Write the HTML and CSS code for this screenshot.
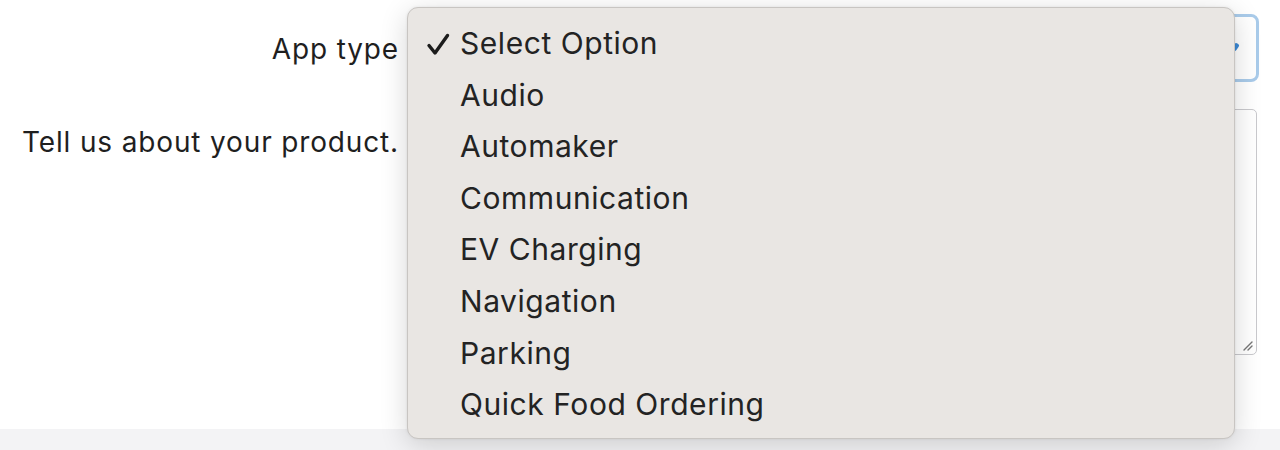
FILE: index.html
```html
<!DOCTYPE html>
<html lang="en">
<head>
<meta charset="utf-8">
<title>App form</title>
<link rel="stylesheet" href="styles.css">
</head>
<body>
<div class="page">
  <form class="form">
    <div class="row row-select">
      <label class="label">App type</label>
      <div class="select">
        <span class="arrow"></span>
      </div>
    </div>
    <div class="row row-text">
      <label class="label">Tell us about your product.</label>
      <div class="textarea">
        <svg class="grip" width="12" height="12" viewBox="0 0 12 12"><path d="M11 3 L3 11 M11 7 L7 11" stroke="#777" stroke-width="1.4" stroke-linecap="round"/></svg>
      </div>
    </div>
  </form>
  <div class="footer"></div>
  <ul class="menu">
    <li class="item selected"><svg class="check" width="24" height="24" viewBox="0 0 24 24"><path d="M3 13.5 L9 21 L21.5 3.5" fill="none" stroke="#1c1c1c" stroke-width="3.4" stroke-linecap="round" stroke-linejoin="round"/></svg>Select Option</li>
    <li class="item">Audio</li>
    <li class="item">Automaker</li>
    <li class="item">Communication</li>
    <li class="item">EV Charging</li>
    <li class="item">Navigation</li>
    <li class="item">Parking</li>
    <li class="item">Quick Food Ordering</li>
  </ul>
</div>
</body>
</html>
```
FILE: styles.css
```css
* { box-sizing: border-box; }
html, body { margin: 0; padding: 0; background: #fff; }
body {
  font-family: Inter, "Noto Sans", "Liberation Sans", sans-serif;
  color: #1f1f1f;
  width: 1280px;
  height: 450px;
  overflow: hidden;
}
.page { position: relative; height: 450px; }
.form {
  display: flex;
  flex-direction: column;
  gap: 27px;
  padding-top: 14px;
  height: 429px;
}
.row {
  display: grid;
  grid-template-columns: 398px 851px;
  column-gap: 10px;
}
.label {
  text-align: right;
  font-size: 28px;
  letter-spacing: 0.85px;
  margin-right: -1px;
}
.row-select .label { line-height: 70px; height: 68px; }
.row-text .label { line-height: 66px; }
.select {
  height: 68px;
  border: 3px solid #a9cbea;
  border-radius: 8px;
  position: relative;
  background: #fff;
}
.arrow {
  position: absolute;
  right: 18px;
  top: 26px;
  width: 5px;
  height: 8px;
  background: #3d8ad6;
  border-radius: 2px;
  transform: rotate(35deg);
}
.textarea {
  height: 246px;
  width: 849px;
  border: 1px solid #c9c9cd;
  border-radius: 5px;
  position: relative;
  background: #fff;
}
.grip { position: absolute; right: 3px; bottom: 3px; }
.footer {
  height: 21px;
  background: #f3f3f5;
}
.menu {
  position: absolute;
  left: 407px;
  top: 7px;
  width: 828px;
  height: 432px;
  margin: 0;
  padding: 10px 0 9px 0;
  list-style: none;
  background: #e9e6e3;
  border: 1px solid #c8c5c2;
  border-radius: 11px;
  box-shadow: 0 6px 28px rgba(0,0,0,0.16), 0 0 3px rgba(0,0,0,0.08);
}
.item {
  height: 51.6px;
  line-height: 51.6px;
  padding-left: 52px;
  font-size: 30px;
  color: #232323;
  position: relative;
  letter-spacing: 0.55px;
}
.check {
  position: absolute;
  left: 18px;
  top: 14px;
}
```
